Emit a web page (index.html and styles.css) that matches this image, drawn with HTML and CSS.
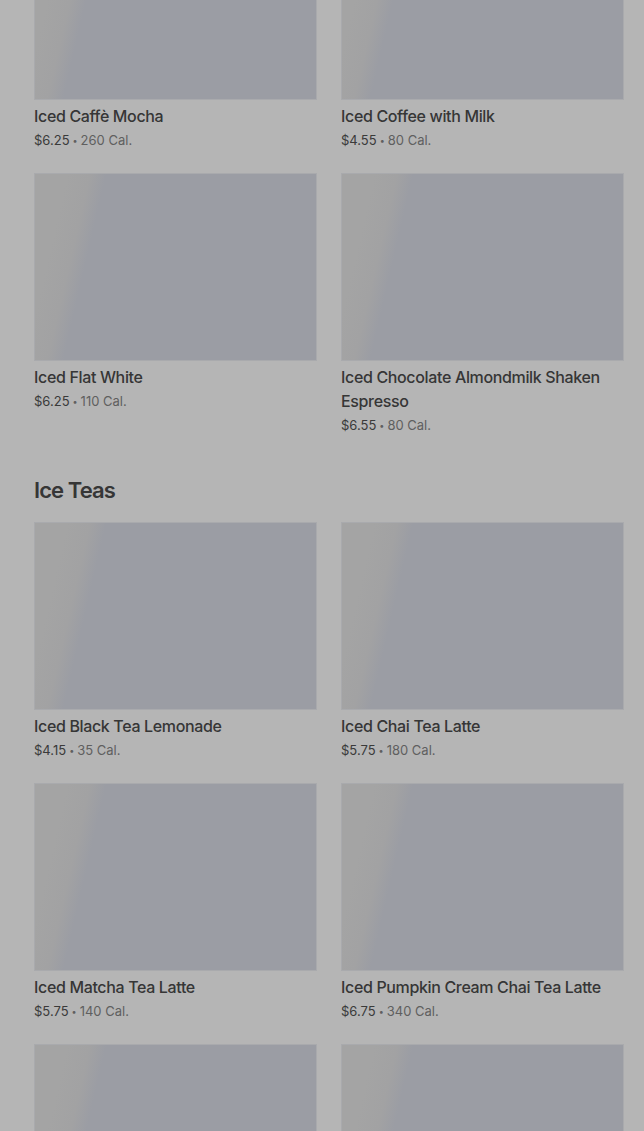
FILE: index.html
```html
<!DOCTYPE html>
<html lang="en">
<head>
  <meta charset="UTF-8">
  <meta name="viewport" content="width=device-width, initial-scale=1.0">
  <title>Menu</title>
  <link rel="stylesheet" href="styles.css">
</head>
<body>
  <main class="menu">
    <section class="category category-first">
      <div class="item-grid">
        <div class="item">
          <div class="item-image"></div>
          <h3>Iced Caffè Mocha</h3>
          <p class="meta"><span class="price">$6.25</span><span class="dot">•</span>260 Cal.</p>
        </div>
        <div class="item">
          <div class="item-image"></div>
          <h3>Iced Coffee with Milk</h3>
          <p class="meta"><span class="price">$4.55</span><span class="dot">•</span>80 Cal.</p>
        </div>
        <div class="item">
          <div class="item-image"></div>
          <h3>Iced Flat White</h3>
          <p class="meta"><span class="price">$6.25</span><span class="dot">•</span>110 Cal.</p>
        </div>
        <div class="item">
          <div class="item-image"></div>
          <h3>Iced Chocolate Almondmilk Shaken Espresso</h3>
          <p class="meta"><span class="price">$6.55</span><span class="dot">•</span>80 Cal.</p>
        </div>
      </div>
    </section>

    <section class="category">
      <h2>Ice Teas</h2>
      <div class="item-grid">
        <div class="item">
          <div class="item-image"></div>
          <h3>Iced Black Tea Lemonade</h3>
          <p class="meta"><span class="price">$4.15</span><span class="dot">•</span>35 Cal.</p>
        </div>
        <div class="item">
          <div class="item-image"></div>
          <h3>Iced Chai Tea Latte</h3>
          <p class="meta"><span class="price">$5.75</span><span class="dot">•</span>180 Cal.</p>
        </div>
        <div class="item">
          <div class="item-image"></div>
          <h3>Iced Matcha Tea Latte</h3>
          <p class="meta"><span class="price">$5.75</span><span class="dot">•</span>140 Cal.</p>
        </div>
        <div class="item">
          <div class="item-image"></div>
          <h3>Iced Pumpkin Cream Chai Tea Latte</h3>
          <p class="meta"><span class="price">$6.75</span><span class="dot">•</span>340 Cal.</p>
        </div>
        <div class="item">
          <div class="item-image"></div>
        </div>
        <div class="item">
          <div class="item-image"></div>
        </div>
      </div>
    </section>
  </main>
</body>
</html>
```

FILE: styles.css
```css
body {
  margin: 0;
  font-family: 'Inter', 'Roboto', sans-serif;
  background: #b5b5b5;
  color: #363636;
  overflow: hidden;
  height: 1131px;
}

.menu {
  padding: 0 20px 0 34px;
}

.category-first {
  margin-top: -88px;
}

.category h2 {
  font-size: 22px;
  font-weight: 600;
  letter-spacing: -0.9px;
  line-height: 32px;
  margin: 39px 0 16px;
  color: #363636;
}

.item-grid {
  display: grid;
  grid-template-columns: 1fr 1fr;
  column-gap: 24px;
  row-gap: 23px;
}

.item-image {
  height: 186px;
  border: 1px solid #a9aaad;
  background: linear-gradient(103deg, #a4a4a4 0, #a4a4a4 10%, #a2a2a3 17%, #9b9da4 22%, #9b9da4 100%);
}

.item h3 {
  margin: 4px 0 0;
  font-size: 16px;
  font-weight: 500;
  line-height: 24px;
  letter-spacing: -0.35px;
}

.meta {
  margin: 2px 0 0;
  height: 20px;
  font-size: 13px;
  line-height: 20px;
  color: #5f5f5f;
}

.meta .price {
  color: #3a3a3a;
}

.meta .dot {
  font-size: 9px;
  line-height: 0;
  vertical-align: middle;
  margin: 0 3px;
}
```
